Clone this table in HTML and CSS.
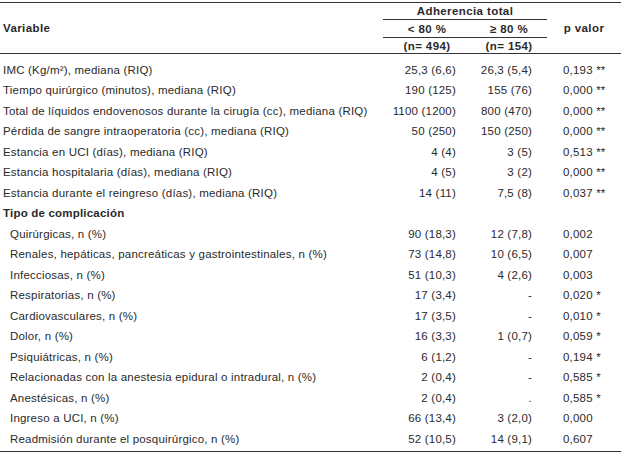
FILE: index.html
```html
<!DOCTYPE html>
<html lang="es">
<head>
<meta charset="utf-8">
<title>Adherencia total</title>
<link rel="stylesheet" href="styles.css">
</head>
<body>
<table class="tbl">
  <colgroup>
    <col class="c-var">
    <col class="c-a">
    <col class="c-b">
    <col class="c-p">
  </colgroup>
  <thead>
    <tr class="h1">
      <th class="var" rowspan="3">Variable</th>
      <th class="grp" colspan="2">Adherencia total</th>
      <th class="pv" rowspan="3">p valor</th>
    </tr>
    <tr class="h2">
      <th class="sub">&lt; 80 %</th>
      <th class="sub">≥ 80 %</th>
    </tr>
    <tr class="h3">
      <th class="n">(n= 494)</th>
      <th class="n">(n= 154)</th>
    </tr>
  </thead>
  <tbody>
    <tr class="first"><td class="lbl">IMC (Kg/m²), mediana (RIQ)</td><td class="num">25,3 (6,6)</td><td class="num">26,3 (5,4)</td><td class="p">0,193 **</td></tr>
    <tr><td class="lbl">Tiempo quirúrgico (minutos), mediana (RIQ)</td><td class="num">190 (125)</td><td class="num">155 (76)</td><td class="p">0,000 **</td></tr>
    <tr><td class="lbl">Total de líquidos endovenosos durante la cirugía (cc), mediana (RIQ)</td><td class="num">1100 (1200)</td><td class="num">800 (470)</td><td class="p">0,000 **</td></tr>
    <tr><td class="lbl">Pérdida de sangre intraoperatoria (cc), mediana (RIQ)</td><td class="num">50 (250)</td><td class="num">150 (250)</td><td class="p">0,000 **</td></tr>
    <tr><td class="lbl">Estancia en UCI (días), mediana (RIQ)</td><td class="num">4 (4)</td><td class="num">3 (5)</td><td class="p">0,513 **</td></tr>
    <tr><td class="lbl">Estancia hospitalaria (días), mediana (RIQ)</td><td class="num">4 (5)</td><td class="num">3 (2)</td><td class="p">0,000 **</td></tr>
    <tr><td class="lbl">Estancia durante el reingreso (días), mediana (RIQ)</td><td class="num">14 (11)</td><td class="num">7,5 (8)</td><td class="p">0,037 **</td></tr>
    <tr><td class="lbl sec" colspan="4">Tipo de complicación</td></tr>
    <tr><td class="lbl ind">Quirúrgicas, n (%)</td><td class="num">90 (18,3)</td><td class="num">12 (7,8)</td><td class="p">0,002</td></tr>
    <tr><td class="lbl ind">Renales, hepáticas, pancreáticas y gastrointestinales, n (%)</td><td class="num">73 (14,8)</td><td class="num">10 (6,5)</td><td class="p">0,007</td></tr>
    <tr><td class="lbl ind">Infecciosas, n (%)</td><td class="num">51 (10,3)</td><td class="num">4 (2,6)</td><td class="p">0,003</td></tr>
    <tr><td class="lbl ind">Respiratorias, n (%)</td><td class="num">17 (3,4)</td><td class="num">-</td><td class="p">0,020 *</td></tr>
    <tr><td class="lbl ind">Cardiovasculares, n (%)</td><td class="num">17 (3,5)</td><td class="num">-</td><td class="p">0,010 *</td></tr>
    <tr><td class="lbl ind">Dolor, n (%)</td><td class="num">16 (3,3)</td><td class="num">1 (0,7)</td><td class="p">0,059 *</td></tr>
    <tr><td class="lbl ind">Psiquiátricas, n (%)</td><td class="num">6 (1,2)</td><td class="num">-</td><td class="p">0,194 *</td></tr>
    <tr><td class="lbl ind">Relacionadas con la anestesia epidural o intradural, n (%)</td><td class="num">2 (0,4)</td><td class="num">-</td><td class="p">0,585 *</td></tr>
    <tr><td class="lbl ind">Anestésicas, n (%)</td><td class="num">2 (0,4)</td><td class="num">.</td><td class="p">0,585 *</td></tr>
    <tr><td class="lbl ind">Ingreso a UCI, n (%)</td><td class="num">66 (13,4)</td><td class="num">3 (2,0)</td><td class="p">0,000</td></tr>
    <tr class="last"><td class="lbl ind">Readmisión durante el posquirúrgico, n (%)</td><td class="num">52 (10,5)</td><td class="num">14 (9,1)</td><td class="p">0,607</td></tr>
  </tbody>
</table>
</body>
</html>
```

FILE: styles.css
```css
html, body {
  margin: 0;
  padding: 0;
  background: #ffffff;
}

body {
  padding-top: 2px;
  font-family: "Liberation Sans", Arial, sans-serif;
  font-size: 11.5px;
  letter-spacing: 0.2px;
  color: #2a2a2a;
}

.tbl {
  border-collapse: collapse;
  table-layout: fixed;
  width: 621px;
  border-top: 1px solid #333;
}

.c-var { width: 383px; }
.c-a { width: 88px; }
.c-b { width: 76px; }
.c-p { width: 74px; }

th, td {
  padding: 0;
  vertical-align: middle;
  white-space: nowrap;
}

th {
  font-weight: bold;
  text-align: center;
  letter-spacing: 0.4px;
}

.h1 th { height: 16px; }
.h2 th { height: 17px; }
.h3 th { height: 15px; }

.grp { border-bottom: 1px solid #333; }
.sub { border-bottom: 1px solid #333; }

.var {
  text-align: left;
  padding-left: 3px;
  border-bottom: 1px solid #333;
}

.pv, .n {
  border-bottom: 1px solid #333;
}

td {
  height: 20.5px;
  line-height: 13px;
}

.first td {
  padding-top: 6px;
}

.last td {
  padding-bottom: 1px;
  border-bottom: 1px solid #333;
}

.lbl { padding-left: 3px; }
.lbl.ind { padding-left: 10px; }
.lbl.sec { font-weight: bold; }

.num {
  text-align: right;
  padding-right: 15px;
}

.p {
  text-align: left;
  padding-left: 16px;
}
```
